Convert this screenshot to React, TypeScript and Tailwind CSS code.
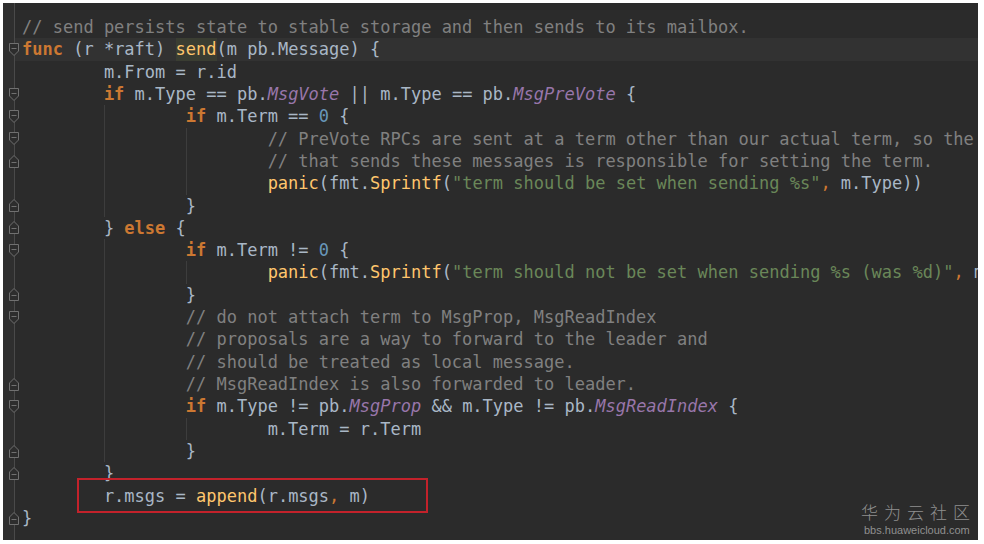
import React from 'react';

type Kind = 't' | 'k' | 'c' | 's' | 'n' | 'p' | 'f' | 'o' | 'h';
type Tok = [string, Kind];

const tone: Record<Kind, string> = {
  t: 'text-[#a9b7c6]',
  k: 'text-[#cc7832] font-bold',
  c: 'text-[#808080]',
  s: 'text-[#6a8759]',
  n: 'text-[#6897bb]',
  p: 'text-[#9876aa] italic',
  f: 'text-[#ffc66d]',
  o: 'text-[#cc7832]',
  h: 'text-[#ffc66d] bg-[#3a3d32]',
};

// indent level, fold marker (s = open, e = close), tokens
const lines: { indent: number; fold?: 's' | 'e'; caret?: boolean; toks: Tok[] }[] = [
  { indent: 0, toks: [['// send persists state to stable storage and then sends to its mailbox.', 'c']] },
  { indent: 0, fold: 's', caret: true, toks: [['func', 'k'], [' (r *raft) ', 't'], ['send', 'h'], ['(m pb.Message) {', 't']] },
  { indent: 1, toks: [['m.From = r.id', 't']] },
  { indent: 1, fold: 's', toks: [['if', 'k'], [' m.Type == pb.', 't'], ['MsgVote', 'p'], [' || m.Type == pb.', 't'], ['MsgPreVote', 'p'], [' {', 't']] },
  { indent: 2, fold: 's', toks: [['if', 'k'], [' m.Term == ', 't'], ['0', 'n'], [' {', 't']] },
  { indent: 3, fold: 's', toks: [['// PreVote RPCs are sent at a term other than our actual term, so the node', 'c']] },
  { indent: 3, fold: 'e', toks: [['// that sends these messages is responsible for setting the term.', 'c']] },
  { indent: 3, toks: [['panic', 'f'], ['(fmt.', 't'], ['Sprintf', 'f'], ['(', 't'], ['"term should be set when sending %s"', 's'], [',', 'o'], [' m.Type))', 't']] },
  { indent: 2, fold: 'e', toks: [['}', 't']] },
  { indent: 1, fold: 'e', toks: [['} ', 't'], ['else', 'k'], [' {', 't']] },
  { indent: 2, fold: 's', toks: [['if', 'k'], [' m.Term != ', 't'], ['0', 'n'], [' {', 't']] },
  { indent: 3, toks: [['panic', 'f'], ['(fmt.', 't'], ['Sprintf', 'f'], ['(', 't'], ['"term should not be set when sending %s (was %d)"', 's'], [',', 'o'], [' m.Type, m.Term))', 't']] },
  { indent: 2, fold: 'e', toks: [['}', 't']] },
  { indent: 2, fold: 's', toks: [['// do not attach term to MsgProp, MsgReadIndex', 'c']] },
  { indent: 2, toks: [['// proposals are a way to forward to the leader and', 'c']] },
  { indent: 2, toks: [['// should be treated as local message.', 'c']] },
  { indent: 2, fold: 'e', toks: [['// MsgReadIndex is also forwarded to leader.', 'c']] },
  { indent: 2, fold: 's', toks: [['if', 'k'], [' m.Type != pb.', 't'], ['MsgProp', 'p'], [' && m.Type != pb.', 't'], ['MsgReadIndex', 'p'], [' {', 't']] },
  { indent: 3, toks: [['m.Term = r.Term', 't']] },
  { indent: 2, fold: 'e', toks: [['}', 't']] },
  { indent: 1, fold: 'e', toks: [['}', 't']] },
  { indent: 1, toks: [['r.msgs = ', 't'], ['append', 'f'], ['(r.msgs', 't'], [',', 'o'], [' m)', 't']] },
  { indent: 0, fold: 'e', toks: [['}', 't']] },
];

const FoldMark = ({ kind }: { kind: 's' | 'e' }) => (
  <svg width="12" height="15" viewBox="0 0 12 15" className="relative z-10 -mr-[6px] shrink-0">
    {kind === 's' ? (
      <path d="M1.5 1.5 H10.5 V9 L6 13.5 L1.5 9 Z" fill="#2d2d2d" stroke="#707070" strokeWidth="1" />
    ) : (
      <path d="M1.5 13.5 H10.5 V6 L6 1.5 L1.5 6 Z" fill="#2d2d2d" stroke="#707070" strokeWidth="1" />
    )}
    <path d={kind === 's' ? 'M3.5 6.5 H8.5' : 'M3.5 8.5 H8.5'} stroke="#707070" strokeWidth="1" />
  </svg>
);

export default function App() {
  return (
    <div className="w-[984px] h-[544px] bg-white pt-[3px] pl-[3px] overflow-hidden">
      <div className="relative w-[975px] h-[537px] bg-[#2b2b2b] flex overflow-hidden font-['DejaVu_Sans_Mono',monospace] text-[17px]">
        {/* gutter with fold markers */}
        <div className="w-[12px] shrink-0 h-full bg-[#2f2f2f] border-r border-[#4a4a4a] pt-[13px] flex flex-col">
          {lines.map((l, i) => (
            <div key={i} className="h-[22.32px] shrink-0 flex items-center justify-end">
              {l.fold && <FoldMark kind={l.fold} />}
            </div>
          ))}
        </div>

        {/* code */}
        <div className="flex-1 min-w-0 pt-[13px] flex flex-col">
          {lines.map((l, i) => (
            <div
              key={i}
              className={`h-[22.32px] leading-[22.32px] shrink-0 flex pl-[7px] whitespace-pre ${l.caret ? 'bg-[#323232]' : ''}`}
            >
              {Array.from({ length: l.indent }).map((_, j) => (
                <span key={j} className={`w-[8ch] shrink-0 h-full ${j > 0 ? 'border-l border-[#3d3d3d]' : ''}`} />
              ))}
              {l.toks.map(([text, kind], j) => (
                <span key={j} className={`shrink-0 ${tone[kind]}`}>
                  {text}
                </span>
              ))}
            </div>
          ))}
        </div>

        {/* annotation box */}
        <div className="absolute left-[74px] top-[475px] w-[351px] h-[35px] border-2 border-[#c3222b]" />

        {/* watermark */}
        <div className="absolute left-[858px] top-[499px] w-max whitespace-nowrap flex flex-col items-start gap-[2px] text-[#8f8f8f]">
          <span className="font-['Noto_Sans_CJK_SC',sans-serif] text-[17px] leading-[20px] tracking-[6px] font-light">华为云社区</span>
          <span className="font-['Liberation_Sans',sans-serif] text-[11px] leading-[12px] pl-[3px]">bbs.huaweicloud.com</span>
        </div>
      </div>
    </div>
  );
}
